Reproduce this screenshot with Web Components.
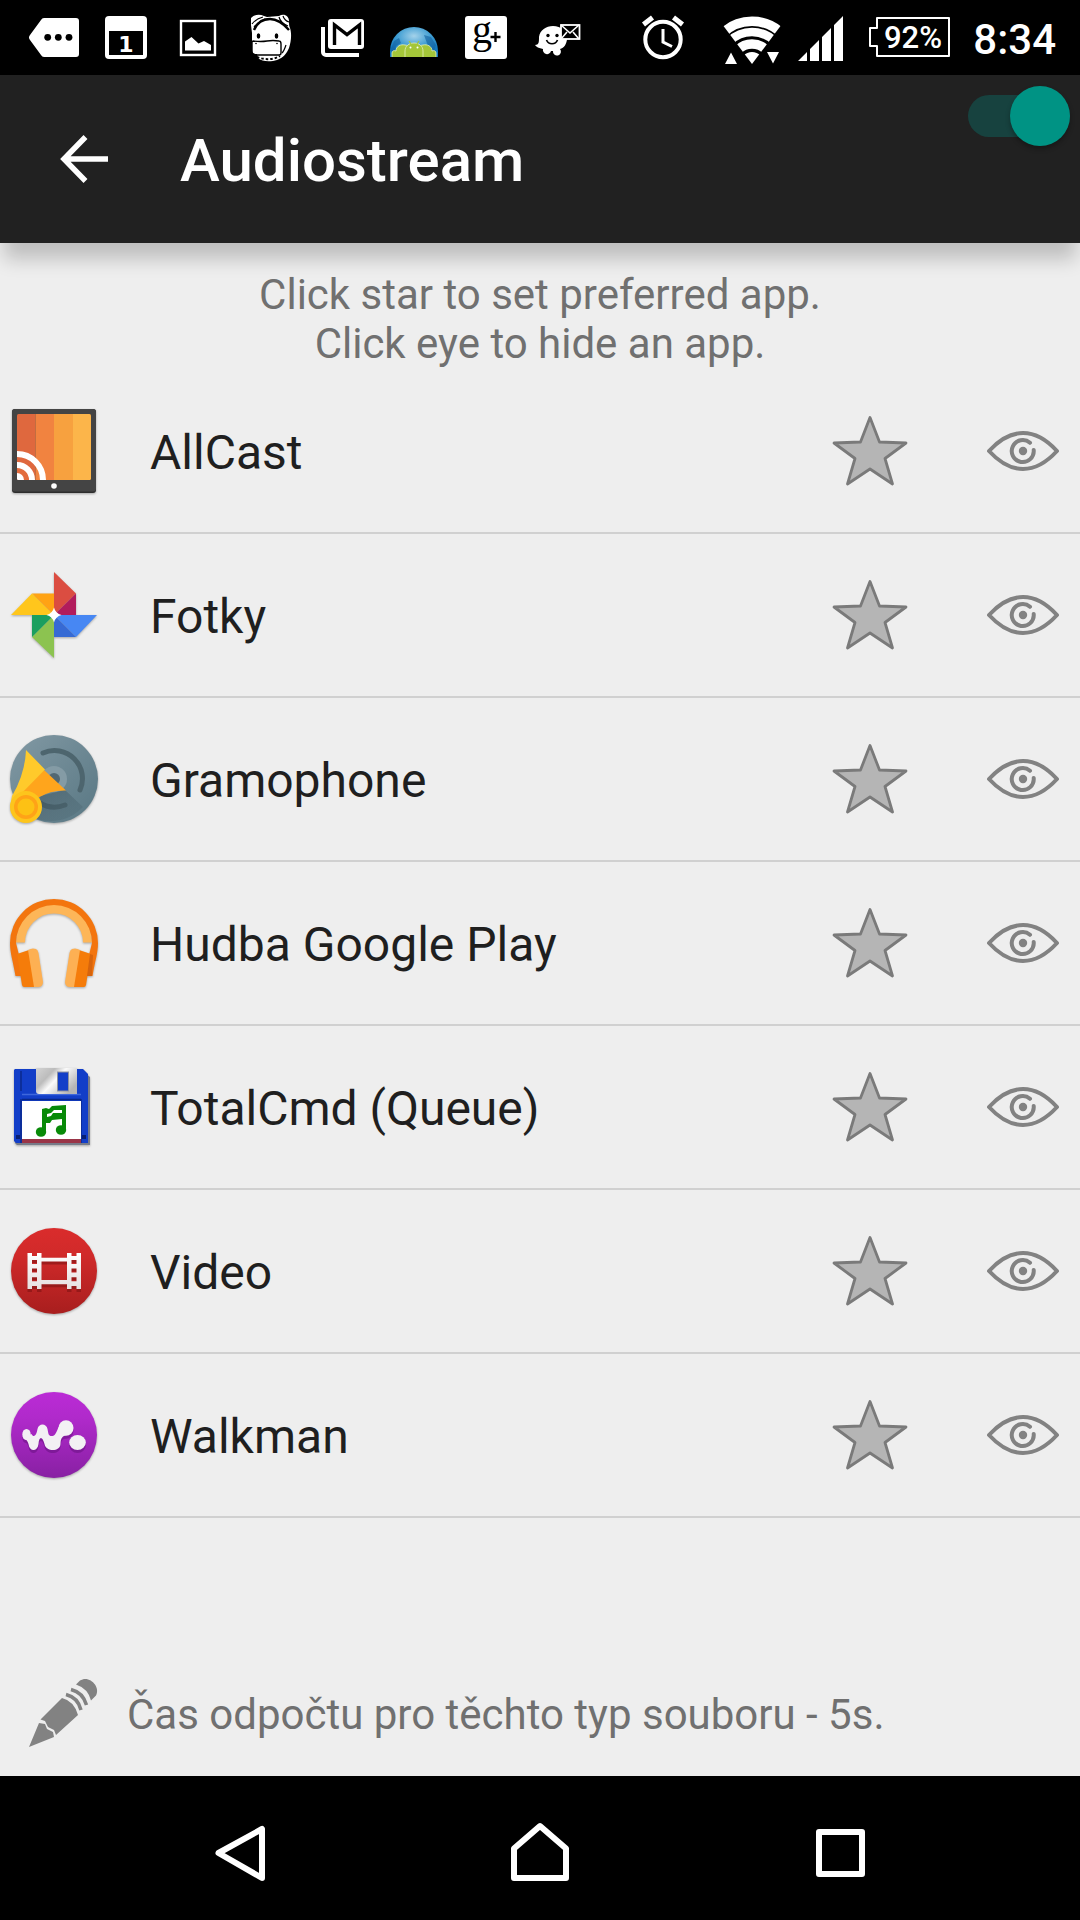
<!DOCTYPE html>
<html lang="cs">
<head>
<meta charset="utf-8">
<meta name="viewport" content="width=device-width, initial-scale=1">
<title>Audiostream</title>
<style>
  body {
    margin: 0;
    background: #eee;
    color: #1f1f1f;
    font-family: Roboto, "Noto Sans", sans-serif;
  }
</style>
</head>
<body>

<app-screen>
  <status-bar slot="status" time="8:34">
    <glyph-icon name="tag"></glyph-icon>
    <glyph-icon name="calendar"></glyph-icon>
    <glyph-icon name="picture"></glyph-icon>
    <glyph-icon name="hippo"></glyph-icon>
    <glyph-icon name="gmail"></glyph-icon>
    <glyph-icon name="droids"></glyph-icon>
    <glyph-icon name="gplus"></glyph-icon>
    <glyph-icon name="waze"></glyph-icon>
    <glyph-icon slot="system" name="alarm"></glyph-icon>
    <glyph-icon slot="system" name="wifi"></glyph-icon>
    <glyph-icon slot="system" name="signal"></glyph-icon>
    <glyph-icon slot="system" name="battery"></glyph-icon>
  </status-bar>

  <app-bar slot="header">
    Audiostream
    <toggle-switch slot="action" label="Audiostream" checked></toggle-switch>
  </app-bar>

  <hint-text>Click star to set preferred app.<br>Click eye to hide an app.</hint-text>

  <app-list>
    <app-row icon="allcast">AllCast</app-row>
    <app-row icon="photos">Fotky</app-row>
    <app-row icon="gramophone">Gramophone</app-row>
    <app-row icon="headphones">Hudba Google Play</app-row>
    <app-row icon="floppy">TotalCmd (Queue)</app-row>
    <app-row icon="film">Video</app-row>
    <app-row icon="walkman">Walkman</app-row>
  </app-list>

  <timeout-setting slot="footer">Čas odpočtu pro těchto typ souboru - 5s.</timeout-setting>
  <nav-bar slot="nav"></nav-bar>
</app-screen>

<script>
// name: [viewBox, markup]
const ICONS = {
  // status bar
  tag: ["0 0 72 75", `
    <path fill="#fff" d="M26 18H58a3 3 0 0 1 3 3V54a3 3 0 0 1-3 3H26a4 4 0 0 1-3-2L12 40a4 4 0 0 1 0-5L23 20a4 4 0 0 1 3-2z"/>
    <circle cx="29.7" cy="37.3" r="3.4"/><circle cx="40.3" cy="37.3" r="3.4"/><circle cx="51" cy="37.3" r="3.4"/>`],
  calendar: ["0 0 72 75", `
    <rect x="15" y="16" width="42" height="43" rx="4" fill="#fff"/>
    <rect x="19" y="31" width="34" height="24"/>
    <text x="36" y="52" font-family="DejaVu Sans" font-weight="bold" font-size="22" text-anchor="middle" fill="#fff">1</text>`],
  picture: ["0 0 72 75", `
    <rect x="19" y="21" width="34" height="34" fill="none" stroke="#fff" stroke-width="2.4"/>
    <path fill="#fff" d="M23 50.5V41.5L29.5 37 36.5 43.5 42 41 49 45V50.5z"/>`],
  hippo: ["0 0 72 75", `
    <path fill="#fff" d="M17 18c4-4 9-4 13-2l3 1 12-1c5-3 10 0 10 5 0 3 0 5 1 7 2 6 1 14-1 20-2 5-6 10-12 12-6 2-15 2-19-2l-1-4c-4 0-5-2-5-5V33l-1-8z"/>
    <g fill="none" stroke="#000">
      <path d="M20 30c3-7 9-11 16-11s13 4 19 11" stroke-width="2.4"/>
      <path d="M18 24c3-4 7-6 11-7M20 27c3-4 7-6 11-8M45 17c1 4 4 7 9 9M49 16c1 3 3 5 6 6" stroke-width="1.2"/>
      <path d="M19 41q8 1 14 0t12 0q2 0 2 3v9q0 2-2 2H22q-4 0-4-3V43q0-2 1-2z" stroke-width="1.4"/>
      <path d="M23 57c7 3 16 3 23-1" stroke-width="2" stroke-dasharray="2.5 2"/>
      <path d="M48 53c2-2 3-5 4-8" stroke-width="1.2"/>
    </g>
    <ellipse cx="24.5" cy="36" rx="1.8" ry="2.8"/><ellipse cx="42.5" cy="36" rx="1.8" ry="2.8"/>
    <circle cx="22" cy="43.5" r=".8"/><circle cx="43" cy="43.5" r=".8"/>`],
  gmail: ["0 0 72 75", `
    <path d="M17 27V52a3 3 0 0 0 3 3H53" fill="none" stroke="#fff" stroke-width="4"/>
    <rect x="22" y="19" width="36" height="30" rx="3" fill="#fff"/>
    <path d="M28.500 45V25L41 34.500 53.500 25V45" fill="none" stroke="#000" stroke-width="3.4"/>`],
  droids: ["0 0 72 75", `
    <defs>
      <radialGradient id="sky" cx=".5" cy=".3" r=".6"><stop offset="0" stop-color="#a4d2ea"/><stop offset=".6" stop-color="#3d9cd2"/><stop offset="1" stop-color="#1478bd"/></radialGradient>
      <clipPath id="dome"><path d="M12 57V51a24 24 0 0 1 48 0V57z"/></clipPath>
    </defs>
    <g clip-path="url(#dome)">
      <rect x="12" y="27" width="48" height="30" fill="url(#sky)"/>
      <path fill="#125f9f" opacity=".6" d="M12 51l4-10 5-3 2 5-5 3-1 5zM46 35l7 2 5 8-2 6-6-5z"/>
      <g fill="#a4c639" stroke="#e4efbd" stroke-width=".8">
        <path d="M14 58v-5c0-2 2-3 4-2 0-5 5-7 9-6 2 0 3 1 4 2v11zM58 58v-5c0-2-2-3-4-2 0-5-5-7-9-6-2 0-3 1-4 2v11z"/>
        <path d="M27 58v-7c0-5 4-8 9-8s9 3 9 8v7z"/>
      </g>
      <path d="M31 41l2 3M41 41l-2 3" stroke="#a4c639" stroke-width="1.2"/>
      <circle cx="32.5" cy="47.5" r="1" fill="#fff"/><circle cx="39.5" cy="47.5" r="1" fill="#fff"/>
    </g>`],
  gplus: ["0 0 72 75", `
    <rect x="15" y="16" width="42" height="43" rx="3" fill="#fff"/>
    <text x="22" y="43" font-family="Liberation Serif" font-size="40">g</text>
    <path d="M45.5 32v10M40.500 37h10" stroke="#000" stroke-width="2.4"/>`],
  waze: ["0 0 72 75", `
    <path fill="#fff" d="M13 45c4 0 4-3 4-8 1-7 7-11 14-11 8 0 14 5 14 12 0 6-3 10-7 11a4 4 0 1 1-7 2h-2a4 4 0 1 1-8-2c-4-1-7-2-8-4z"/>
    <circle cx="26" cy="35.5" r="1.7"/><circle cx="35" cy="35.5" r="1.7"/>
    <path d="M24.500 40c2 5 9 5 11 0" fill="none" stroke="#000" stroke-width="1.7"/>
    <rect x="39" y="25" width="18.5" height="14" fill="#000" stroke="#fff" stroke-width="1.8"/>
    <path d="M39 25l9 8 9-8M39 39l6-7M57 39l-6-7" fill="none" stroke="#fff" stroke-width="1.6"/>`],
  alarm: ["7 0 72 75", `
    <g fill="none" stroke="#fff">
      <circle cx="36" cy="39.5" r="17.7" stroke-width="4"/>
      <path d="M36 29v13l9 4.500" stroke-width="3"/>
      <path d="M16.500 24.500l9-7M55.500 24.500l-9-7" stroke-width="5"/>
    </g>`],
  wifi: ["6 0 60 75", `
    <defs><clipPath id="wedge"><path d="M36 64L-9 4H81z"/></clipPath></defs>
    <g clip-path="url(#wedge)" fill="none" stroke="#fff">
      <circle cx="36" cy="64" r="42.7" stroke-width="9.5"/>
      <circle cx="36" cy="64" r="32" stroke-width="8.5"/>
      <circle cx="36" cy="64" r="20" stroke-width="9.4"/>
      <circle cx="36" cy="64" r="12" fill="#fff" stroke="none"/>
    </g>
    <path fill="#fff" d="M9 64h12l-6-11.500zM51 52h12l-6 11.500z"/>`],
  signal: ["13 0 54 75", `
    <path fill="#fff" d="M13 61l9-9v9zM25 49l9-9v21h-9zM37 37l9-9v33h-9zM49 25l9-9v45h-9z"/>`],
  battery: ["0 0 89 75", `
    <path d="M9 18H81V56H9V46H2V28H9z" fill="none" stroke="#fff" stroke-width="2" stroke-linejoin="round"/>
    <text x="16" y="48" font-family="Roboto" font-weight="500" font-size="31" fill="#fff">92%</text>`],

  // app icons
  allcast: ["0 0 96 96", `
    <defs><clipPath id="screen"><rect x="11" y="11" width="74" height="66" rx="1.5"/></clipPath></defs>
    <rect x="6" y="6" width="84" height="84" rx="3" fill="#2e2e2e"/>
    <rect x="6" y="6" width="84" height="82.5" rx="3" fill="#444"/>
    <g clip-path="url(#screen)">
      <path fill="#df683e" d="M11 11h18.500v66H11z"/><path fill="#f18340" d="M29.500 11H48v66H29.500z"/>
      <path fill="#f7a13f" d="M48 11h19v66H48z"/><path fill="#fcb54a" d="M67 11h18v66H67z"/>
      <circle cx="11" cy="77" r="18" fill="#e36c3e"/>
      <g fill="none" stroke="#fff" stroke-width="6"><circle cx="11" cy="77" r="26"/><circle cx="11" cy="77" r="15"/></g>
      <circle cx="11" cy="77" r="7" fill="#fff"/>
    </g>
    <circle cx="48" cy="83" r="2.8" fill="#fff"/>`],
  photos: ["0 0 96 96", `
    <path fill="#db4d41" d="M48 5L70 26.500 48 48z"/><path fill="#b11c5c" d="M70 26.500V48H48z"/>
    <path fill="#4787f3" d="M91 48L70 70 48 48z"/><path fill="#366ad4" d="M70 70H48V48z"/>
    <path fill="#8cc350" d="M48 91L26 70 48 48z"/><path fill="#1b9f5f" d="M26 70V48H48z"/>
    <path fill="#ffc61c" d="M5 48L26 26.500 48 48z"/><path fill="#ffa314" d="M26 26.500H48V48z"/>
    <path fill="#fff" d="M48 40.500q1.500 6 7.500 7.500-6 1.500-7.500 7.500-1.500-6-7.500-7.500 6-1.500 7.500-7.500z"/>`],
  gramophone: ["0 0 96 96", `
    <defs>
      <linearGradient id="disc" x2="1" y2="1"><stop offset="0" stop-color="#8299a4"/><stop offset="1" stop-color="#587783"/></linearGradient>
      <linearGradient id="shade" x2="1" y2="1"><stop offset="0" stop-color="#334954" stop-opacity=".5"/><stop offset="1" stop-color="#4a6570" stop-opacity=".2"/></linearGradient>
    </defs>
    <circle cx="48" cy="48" r="44" fill="url(#disc)"/>
    <circle cx="48" cy="48" r="13" fill="#849ba5"/><circle cx="48" cy="48" r="6" fill="#526873"/>
    <g fill="none" stroke="#4d656e" stroke-width="5" stroke-linecap="round"><path d="M37 22a28 28 0 0 1 37 37"/><path d="M34 72a28 28 0 0 0 25 2"/></g>
    <path fill="url(#shade)" d="M59 59L77 76A44 44 0 0 1 31 88L34 65z"/>
    <path fill="#ffa51c" d="M38 39L60 59.500Q45 59 32.500 66.500L20 78 6 70z"/>
    <path fill="#ffca2b" d="M20 19L39 38.500 10 68 4 76 6 65Q19 43 20 19z"/>
    <circle cx="20" cy="76" r="16" fill="#fdc51c"/><circle cx="20" cy="76" r="12" fill="#ffa317"/><circle cx="20" cy="76" r="8.5" fill="#fdc114"/>`],
  headphones: ["0 0 96 96", `
    <path d="M14.500 47.500a33.500 33.500 0 0 1 67 0" fill="none" stroke="#fdb658" stroke-width="9"/>
    <path fill="#f3750e" d="M9.500 81C7 66 4 58 4 48a44 44 0 0 1 88 0c0 10-3 18-5.500 33H81V68l5-20a38 38 0 0 0-76 0l5 20v13z"/>
    <g id="cup">
      <path fill="#f57c0a" d="M11 59l12-4 6 37H18q-1.500 0-2-2z"/>
      <path fill="#fdb053" d="M22 55q4-2.500 8-1 2 1 2.500 4L37 87q0 5-5 5h-4z"/>
    </g>
    <use href="#cup" transform="matrix(-1 0 0 1 96 0)"/>
    <path fill="#d7640c" d="M84 59l3 1-1 21h-5z"/>`],
  floppy: ["0 0 96 96", `
    <defs><linearGradient id="metal" x2="1" y2=".6"><stop offset="0" stop-color="#d4d4d4"/><stop offset=".35" stop-color="#bcbcbc"/><stop offset=".55" stop-color="#fafafa"/><stop offset="1" stop-color="#b5b5b5"/></linearGradient></defs>
    <path fill="#777b88" d="M10 13H78l6 5v68H11l-2-2z"/>
    <path fill="#123ec8" d="M9 10H77l5 5v69H10l-2-2V11z"/>
    <path d="M15 12V32M15 40V84M75 40V84" stroke="#0a2888" stroke-width="1.4"/>
    <path d="M16 35.500H75" stroke="#3e67dc" stroke-width="1.5"/><path d="M16 40.500H75" stroke="#092785" stroke-width="1.5"/>
    <path fill="url(#metal)" d="M30 9H71V35H33q-3 0-3-3z"/>
    <rect x="51.5" y="13" width="11" height="19" fill="#123ec8" stroke="#8d929f"/>
    <rect x="16" y="42" width="59" height="39" fill="#fff"/><rect x="16" y="80" width="59" height="4" fill="#9a3547"/>
    <path fill="#081f73" d="M10 76h4v4h-4zM76 76h4v4h-4z"/>
    <g fill="#088a08"><ellipse cx="35" cy="73" rx="5.2" ry="4.8"/><ellipse cx="55" cy="71" rx="5.2" ry="4.8"/>
    <path d="M36 50l4-1 3 1 3-3 14-1v25h-4V60l-10 1-2 3h-4v9h-4zM41 55v3l4-1 2-3h9v-3H48l-3 3z"/></g>`],
  film: ["0 0 96 96", `
    <defs>
      <linearGradient id="red" x2="0" y2="1"><stop offset="0" stop-color="#da2c2c"/><stop offset=".3" stop-color="#d12a2a"/><stop offset="1" stop-color="#a81e1e"/></linearGradient>
      <linearGradient id="frame" x2="0" y2="1"><stop offset="0" stop-color="#fff"/><stop offset="1" stop-color="#e6dede"/></linearGradient>
      <path id="reel" fill-rule="evenodd" d="M21.500 30H26v3h5v-3h4.500v4.700H61V30h4.500v3h5v-3H75v36h-4.500v-3h-5v3H61v-4.700H35.500V66H31v-3h-5v3h-4.500zM26 37v4h5v-4zm0 8.500v4h5v-4zm0 8.700v4h5v-4zM65.500 37v4h5v-4zm0 8.500v4h5v-4zm0 8.700v4h5v-4zM35.500 38.500V57H61V38.500z"/>
    </defs>
    <circle cx="48" cy="48" r="43" fill="url(#red)"/>
    <use href="#reel" y="3" fill="#7c1212" opacity=".55"/><use href="#reel" fill="url(#frame)"/>`],
  walkman: ["0 0 96 96", `
    <defs>
      <linearGradient id="purple" x2="0" y2="1"><stop offset="0" stop-color="#bb2bd6"/><stop offset=".3" stop-color="#b02acb"/><stop offset="1" stop-color="#8820a3"/></linearGradient>
      <g id="wave">
        <ellipse cx="20.5" cy="47.5" rx="4.2" ry="5.5"/><ellipse cx="60" cy="41" rx="7.5" ry="7.8"/><ellipse cx="71.5" cy="55.5" rx="8.3" ry="7.5"/>
        <path d="M17 51q4 1 5.500 6c1 8 9 8 10 0 .5-8 4-8 6 0 1.500 8 15.500 8 16 0 0-6 2-8 6-9l-8-8c-3 8-4 9-7 9-3 0-3-2-4-7-1-6-9-6-10 0-1 7-4 9-6 5z"/>
      </g>
    </defs>
    <circle cx="48" cy="48" r="43" fill="url(#purple)"/>
    <use href="#wave" y="3" fill="#65107e" opacity=".5"/><use href="#wave" fill="#f3f1f4"/>`],

  // controls
  back: ["0 0 48 48", `
    <path d="M48 24H5M25.500 2L4 24 25.500 46" fill="none" stroke="#fff" stroke-width="5.5"/>`],
  star: ["0 0 96 96", `
    <path d="M48 14.500L57.500 39 84 40 63 55.500 70.500 81 48 66 25.500 81 33 55.500 12 40 38.500 39z" fill="#b5b5b5" stroke="#7a7a7a" stroke-width="2.8" stroke-linejoin="round"/>`],
  eye: ["0 0 96 96", `
    <g fill="none" stroke="#828282" stroke-width="4" stroke-linejoin="round" stroke-linecap="round">
      <path d="M14 48C36 24 60 24 82 48 60 72 36 72 14 48z"/>
      <path d="M55 39.800A11 11 0 1 0 58.700 47"/>
    </g>
    <circle cx="48" cy="48" r="4.2" fill="#828282"/>`],
  pencil: ["0 0 96 96", `
    <g fill="#828282">
      <path d="M14 82L24 58l6 1 2 5 6 3 1 5z"/>
      <path d="M25.500 54.500L47 33q12 3 16 17L41 70l-2-5-6-3-3-6z"/>
      <path d="M61 19.500l4-4c9-6 21 6 16 15l-5 5q-3-12-15-16z"/>
    </g>
    <path d="M51 29.500q12 3 15 15.500M56 24.500q12 3 15.500 15.500" fill="none" stroke="#828282" stroke-width="3.5"/>`],

  // navigation bar
  navBack: ["0 0 96 96", `<path d="M70 29V78L26.500 53z" fill="none" stroke="#fff" stroke-width="6" stroke-linejoin="round"/>`],
  navHome: ["0 0 96 96", `<path d="M22 78V48.500L48 26 74 48.500V78z" fill="none" stroke="#fff" stroke-width="6" stroke-linejoin="round"/>`],
  navRecent: ["0 0 96 96", `<path d="M27 32H70V74H27z" fill="none" stroke="#fff" stroke-width="6" stroke-linejoin="round"/>`]
};

const BUTTON_RESET = `
  button {
    display: flex;
    align-items: center;
    justify-content: center;
    margin: 0;
    padding: 0;
    border: 0;
    background: none;
    color: inherit;
    font: inherit;
    cursor: pointer;
  }
`;

class GlyphIcon extends HTMLElement {
  constructor() {
    super();
    this.attachShadow({ mode: "open" });
  }

  connectedCallback() {
    const [viewBox, markup] = ICONS[this.getAttribute("name")];
    const [, , width, height] = viewBox.split(" ");
    this.shadowRoot.innerHTML = `
      <style>
        :host { display: block; flex: none; }
        svg { display: block; }
      </style>
      <svg width="${width}" height="${height}" viewBox="${viewBox}" aria-hidden="true">${markup}</svg>
    `;
  }
}

class AppScreen extends HTMLElement {
  constructor() {
    super();
    this.attachShadow({ mode: "open" });
    this.shadowRoot.innerHTML = `
      <style>
        :host {
          display: flex;
          flex-direction: column;
          min-height: 100vh;
        }
        main { flex: 1; }
      </style>
      <slot name="status"></slot>
      <slot name="header"></slot>
      <main><slot></slot></main>
      <slot name="footer"></slot>
      <slot name="nav"></slot>
    `;
  }
}

class StatusBar extends HTMLElement {
  constructor() {
    super();
    this.attachShadow({ mode: "open" });
  }

  connectedCallback() {
    this.shadowRoot.innerHTML = `
      <style>
        :host {
          display: flex;
          align-items: center;
          justify-content: space-between;
          height: 75px;
          padding: 0 24px 0 18px;
          background: #000;
          color: #fff;
        }
        div { display: flex; align-items: center; }
        .system { gap: 16px; }
        time {
          padding-top: 4px;
          font-size: 42px;
          font-weight: 500;
          line-height: 49px;
        }
      </style>
      <div><slot></slot></div>
      <div class="system">
        <slot name="system"></slot>
        <time>${this.getAttribute("time")}</time>
      </div>
    `;
  }
}

class ToggleSwitch extends HTMLElement {
  constructor() {
    super();
    this.attachShadow({ mode: "open" });
  }

  connectedCallback() {
    this.shadowRoot.innerHTML = `
      <style>
        :host { display: block; }
        input {
          appearance: none;
          display: flex;
          align-items: center;
          width: 102px;
          height: 42px;
          margin: 0;
          border-radius: 21px;
          background: #4a4a4a;
        }
        input::before {
          content: "";
          flex: none;
          width: 60px;
          height: 60px;
          border-radius: 50%;
          background: #bdbdbd;
          box-shadow: 0 3px 5px rgba(0, 0, 0, 0.3);
        }
        input:checked {
          justify-content: flex-end;
          background: #17423f;
        }
        input:checked::before { background: #009384; }
      </style>
      <input type="checkbox" role="switch" aria-label="${this.getAttribute("label")}" ${this.hasAttribute("checked") ? "checked" : ""}>
    `;
  }
}

class AppBar extends HTMLElement {
  constructor() {
    super();
    this.attachShadow({ mode: "open" });
    this.shadowRoot.innerHTML = `
      <style>
        ${BUTTON_RESET}
        :host {
          display: block;
          background: #212121;
          color: #fff;
          box-shadow: 0 20px 18px -4px rgba(0, 0, 0, 0.2);
        }
        header {
          display: flex;
          align-items: center;
          height: 168px;
        }
        button { width: 168px; height: 100%; }
        h1 {
          flex: 1;
          margin: 0;
          padding: 4px 0 0 12px;
          font-size: 60px;
          font-weight: 500;
          line-height: 70px;
        }
        slot[name="action"] {
          display: block;
          align-self: flex-start;
          padding: 20px 10px;
        }
      </style>
      <header>
        <button type="button" aria-label="Back"><glyph-icon name="back"></glyph-icon></button>
        <h1><slot></slot></h1>
        <slot name="action"></slot>
      </header>
    `;
  }
}

class HintText extends HTMLElement {
  constructor() {
    super();
    this.attachShadow({ mode: "open" });
    this.shadowRoot.innerHTML = `
      <style>
        :host {
          display: block;
          padding: 27px 24px 2px;
          color: #707070;
          font-size: 42px;
          line-height: 49px;
          text-align: center;
        }
        p { margin: 0; }
      </style>
      <p><slot></slot></p>
    `;
  }
}

class AppList extends HTMLElement {
  constructor() {
    super();
    this.attachShadow({ mode: "open" });
    this.shadowRoot.innerHTML = `
      <style>
        :host { display: block; }
      </style>
      <div role="list"><slot></slot></div>
    `;
  }
}

class AppRow extends HTMLElement {
  constructor() {
    super();
    this.attachShadow({ mode: "open" });
  }

  connectedCallback() {
    const name = this.textContent;
    this.setAttribute("role", "listitem");
    this.shadowRoot.innerHTML = `
      <style>
        ${BUTTON_RESET}
        :host {
          display: flex;
          align-items: center;
          height: 162px;
          padding: 0 9px 0 6px;
          border-bottom: 2px solid #d0d0d0;
        }
        .app { filter: drop-shadow(0 1px 1px rgba(0, 0, 0, 0.3)); }
        .name {
          flex: 1;
          padding: 4px 0 0 48px;
          font-size: 48px;
          line-height: 56px;
        }
        .actions { display: flex; gap: 57px; }
      </style>
      <glyph-icon class="app" name="${this.getAttribute("icon")}"></glyph-icon>
      <span class="name"><slot></slot></span>
      <div class="actions">
        <button type="button" aria-label="Prefer ${name}"><glyph-icon name="star"></glyph-icon></button>
        <button type="button" aria-label="Hide ${name}"><glyph-icon name="eye"></glyph-icon></button>
      </div>
    `;
  }
}

class TimeoutSetting extends HTMLElement {
  constructor() {
    super();
    this.attachShadow({ mode: "open" });
    this.shadowRoot.innerHTML = `
      <style>
        ${BUTTON_RESET}
        :host { display: block; color: #707070; }
        button {
          justify-content: flex-start;
          gap: 16px;
          width: 100%;
          height: 126px;
          padding: 0 15px;
          font-size: 42px;
          line-height: 49px;
          text-align: left;
        }
        span { padding-top: 2px; }
      </style>
      <button type="button"><glyph-icon name="pencil"></glyph-icon><span><slot></slot></span></button>
    `;
  }
}

class NavBar extends HTMLElement {
  constructor() {
    super();
    this.attachShadow({ mode: "open" });
    this.shadowRoot.innerHTML = `
      <style>
        ${BUTTON_RESET}
        :host { display: block; background: #000; }
        nav {
          display: grid;
          grid-template-columns: repeat(3, 1fr);
          height: 144px;
          padding: 0 90px;
        }
      </style>
      <nav>
        <button type="button" aria-label="Back"><glyph-icon name="navBack"></glyph-icon></button>
        <button type="button" aria-label="Home"><glyph-icon name="navHome"></glyph-icon></button>
        <button type="button" aria-label="Recent apps"><glyph-icon name="navRecent"></glyph-icon></button>
      </nav>
    `;
  }
}

customElements.define("glyph-icon", GlyphIcon);
customElements.define("app-screen", AppScreen);
customElements.define("status-bar", StatusBar);
customElements.define("toggle-switch", ToggleSwitch);
customElements.define("app-bar", AppBar);
customElements.define("hint-text", HintText);
customElements.define("app-list", AppList);
customElements.define("app-row", AppRow);
customElements.define("timeout-setting", TimeoutSetting);
customElements.define("nav-bar", NavBar);
</script>
</body>
</html>
